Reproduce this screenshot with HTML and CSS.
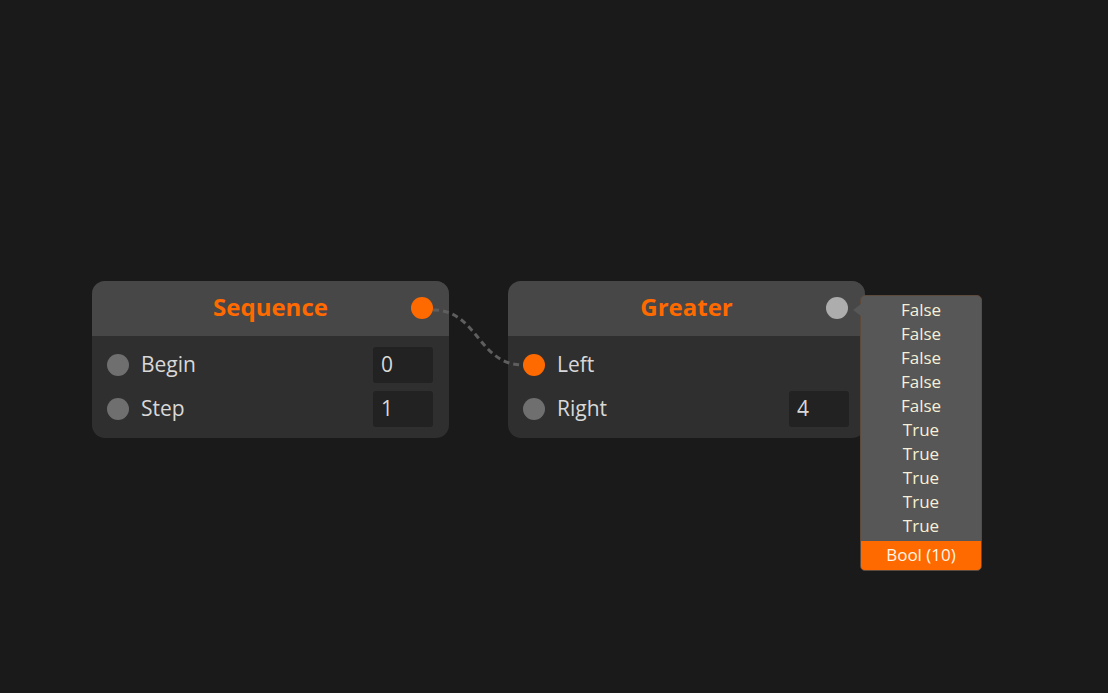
FILE: index.html
```html
<!DOCTYPE html>
<html lang="en">
  <head>
    <meta charset="UTF-8" />
    <title>Node Editor</title>
    <link rel="stylesheet" href="styles.css">
  </head>
  <body>
    <div class="canvas">
      <!-- connection between Sequence output and Greater.Left -->
      <svg class="links" width="1108" height="693">
        <path d="M 433 310 C 478 310 478 365 523 365" />
      </svg>

      <div class="node node-sequence">
        <div class="node-header">
          <span class="node-title">Sequence</span>
          <span class="port port-out active"></span>
        </div>
        <div class="node-body">
          <div class="node-row">
            <span class="port"></span>
            <span class="row-label">Begin</span>
            <span class="row-input">0</span>
          </div>
          <div class="node-row">
            <span class="port"></span>
            <span class="row-label">Step</span>
            <span class="row-input">1</span>
          </div>
        </div>
      </div>

      <div class="node node-greater">
        <div class="node-header">
          <span class="node-title">Greater</span>
          <span class="port port-out light"></span>
        </div>
        <div class="node-body">
          <div class="node-row">
            <span class="port active"></span>
            <span class="row-label">Left</span>
          </div>
          <div class="node-row">
            <span class="port"></span>
            <span class="row-label">Right</span>
            <span class="row-input">4</span>
          </div>
        </div>
      </div>

      <!-- output preview -->
      <div class="preview">
        <div class="preview-list">
          <div>False</div>
          <div>False</div>
          <div>False</div>
          <div>False</div>
          <div>False</div>
          <div>True</div>
          <div>True</div>
          <div>True</div>
          <div>True</div>
          <div>True</div>
        </div>
        <div class="preview-type">Bool (10)</div>
      </div>
    </div>
  </body>
</html>
```

FILE: styles.css
```css
body {
  margin: 0;
  background: #1a1a1a;
  font-family: "Open Sans", "Noto Sans", sans-serif;
  overflow: hidden;
}

.canvas {
  position: relative;
  width: 1108px;
  height: 693px;
}

.links {
  position: absolute;
  top: 0;
  left: 0;
  z-index: 2;
  pointer-events: none;
}

.links path {
  fill: none;
  stroke: #5e5e5e;
  stroke-width: 3;
  stroke-dasharray: 6 4;
}

.node {
  position: absolute;
  top: 281px;
  width: 357px;
  border-radius: 13px;
  overflow: hidden;
  background: #2f2f2f;
  z-index: 1;
}

.node-sequence {
  left: 92px;
}

.node-greater {
  left: 508px;
}

.node-header {
  position: relative;
  height: 55px;
  background: #474747;
  display: flex;
  align-items: center;
  justify-content: center;
}

.node-title {
  color: #ff6a00;
  font-weight: bold;
  font-size: 24px;
  margin-top: -4px;
}

.port {
  width: 22px;
  height: 22px;
  border-radius: 50%;
  background: #6f6f6f;
  flex-shrink: 0;
}

.port.active {
  background: #ff6a00;
}

.port.light {
  background: #adadad;
}

.port-out {
  position: absolute;
  right: 16px;
  top: 16px;
}

.node-greater .port-out {
  right: 17px;
}

.node-body {
  padding: 11px 16px 11px 15px;
  display: flex;
  flex-direction: column;
  gap: 8px;
}

.node-row {
  height: 36px;
  display: flex;
  align-items: center;
  gap: 12px;
}

.row-label {
  flex: 1;
  color: #d8d8d8;
  font-size: 21px;
  margin-top: -2px;
}

.row-input {
  width: 52px;
  height: 36px;
  padding-left: 8px;
  background: #222222;
  border-radius: 3px;
  color: #d8d8d8;
  font-size: 21px;
  line-height: 34px;
}

.preview {
  position: absolute;
  left: 860px;
  top: 295px;
  width: 120px;
  border: 1px solid #5e4a3c;
  border-radius: 5px;
  background: #575757;
  z-index: 3;
}

.preview::before {
  content: "";
  position: absolute;
  left: -8px;
  top: 8px;
  border-top: 6px solid transparent;
  border-bottom: 6px solid transparent;
  border-right: 8px solid #575757;
}

.preview-list {
  padding: 2px 0 3px;
  color: #f6f0d6;
  font-size: 17px;
  text-align: center;
}

.preview-list div {
  height: 24px;
  line-height: 23px;
}

.preview-type {
  height: 29px;
  line-height: 28px;
  background: #ff6a00;
  color: #fff6e6;
  font-size: 17px;
  text-align: center;
  border-radius: 0 0 4px 4px;
}
```
